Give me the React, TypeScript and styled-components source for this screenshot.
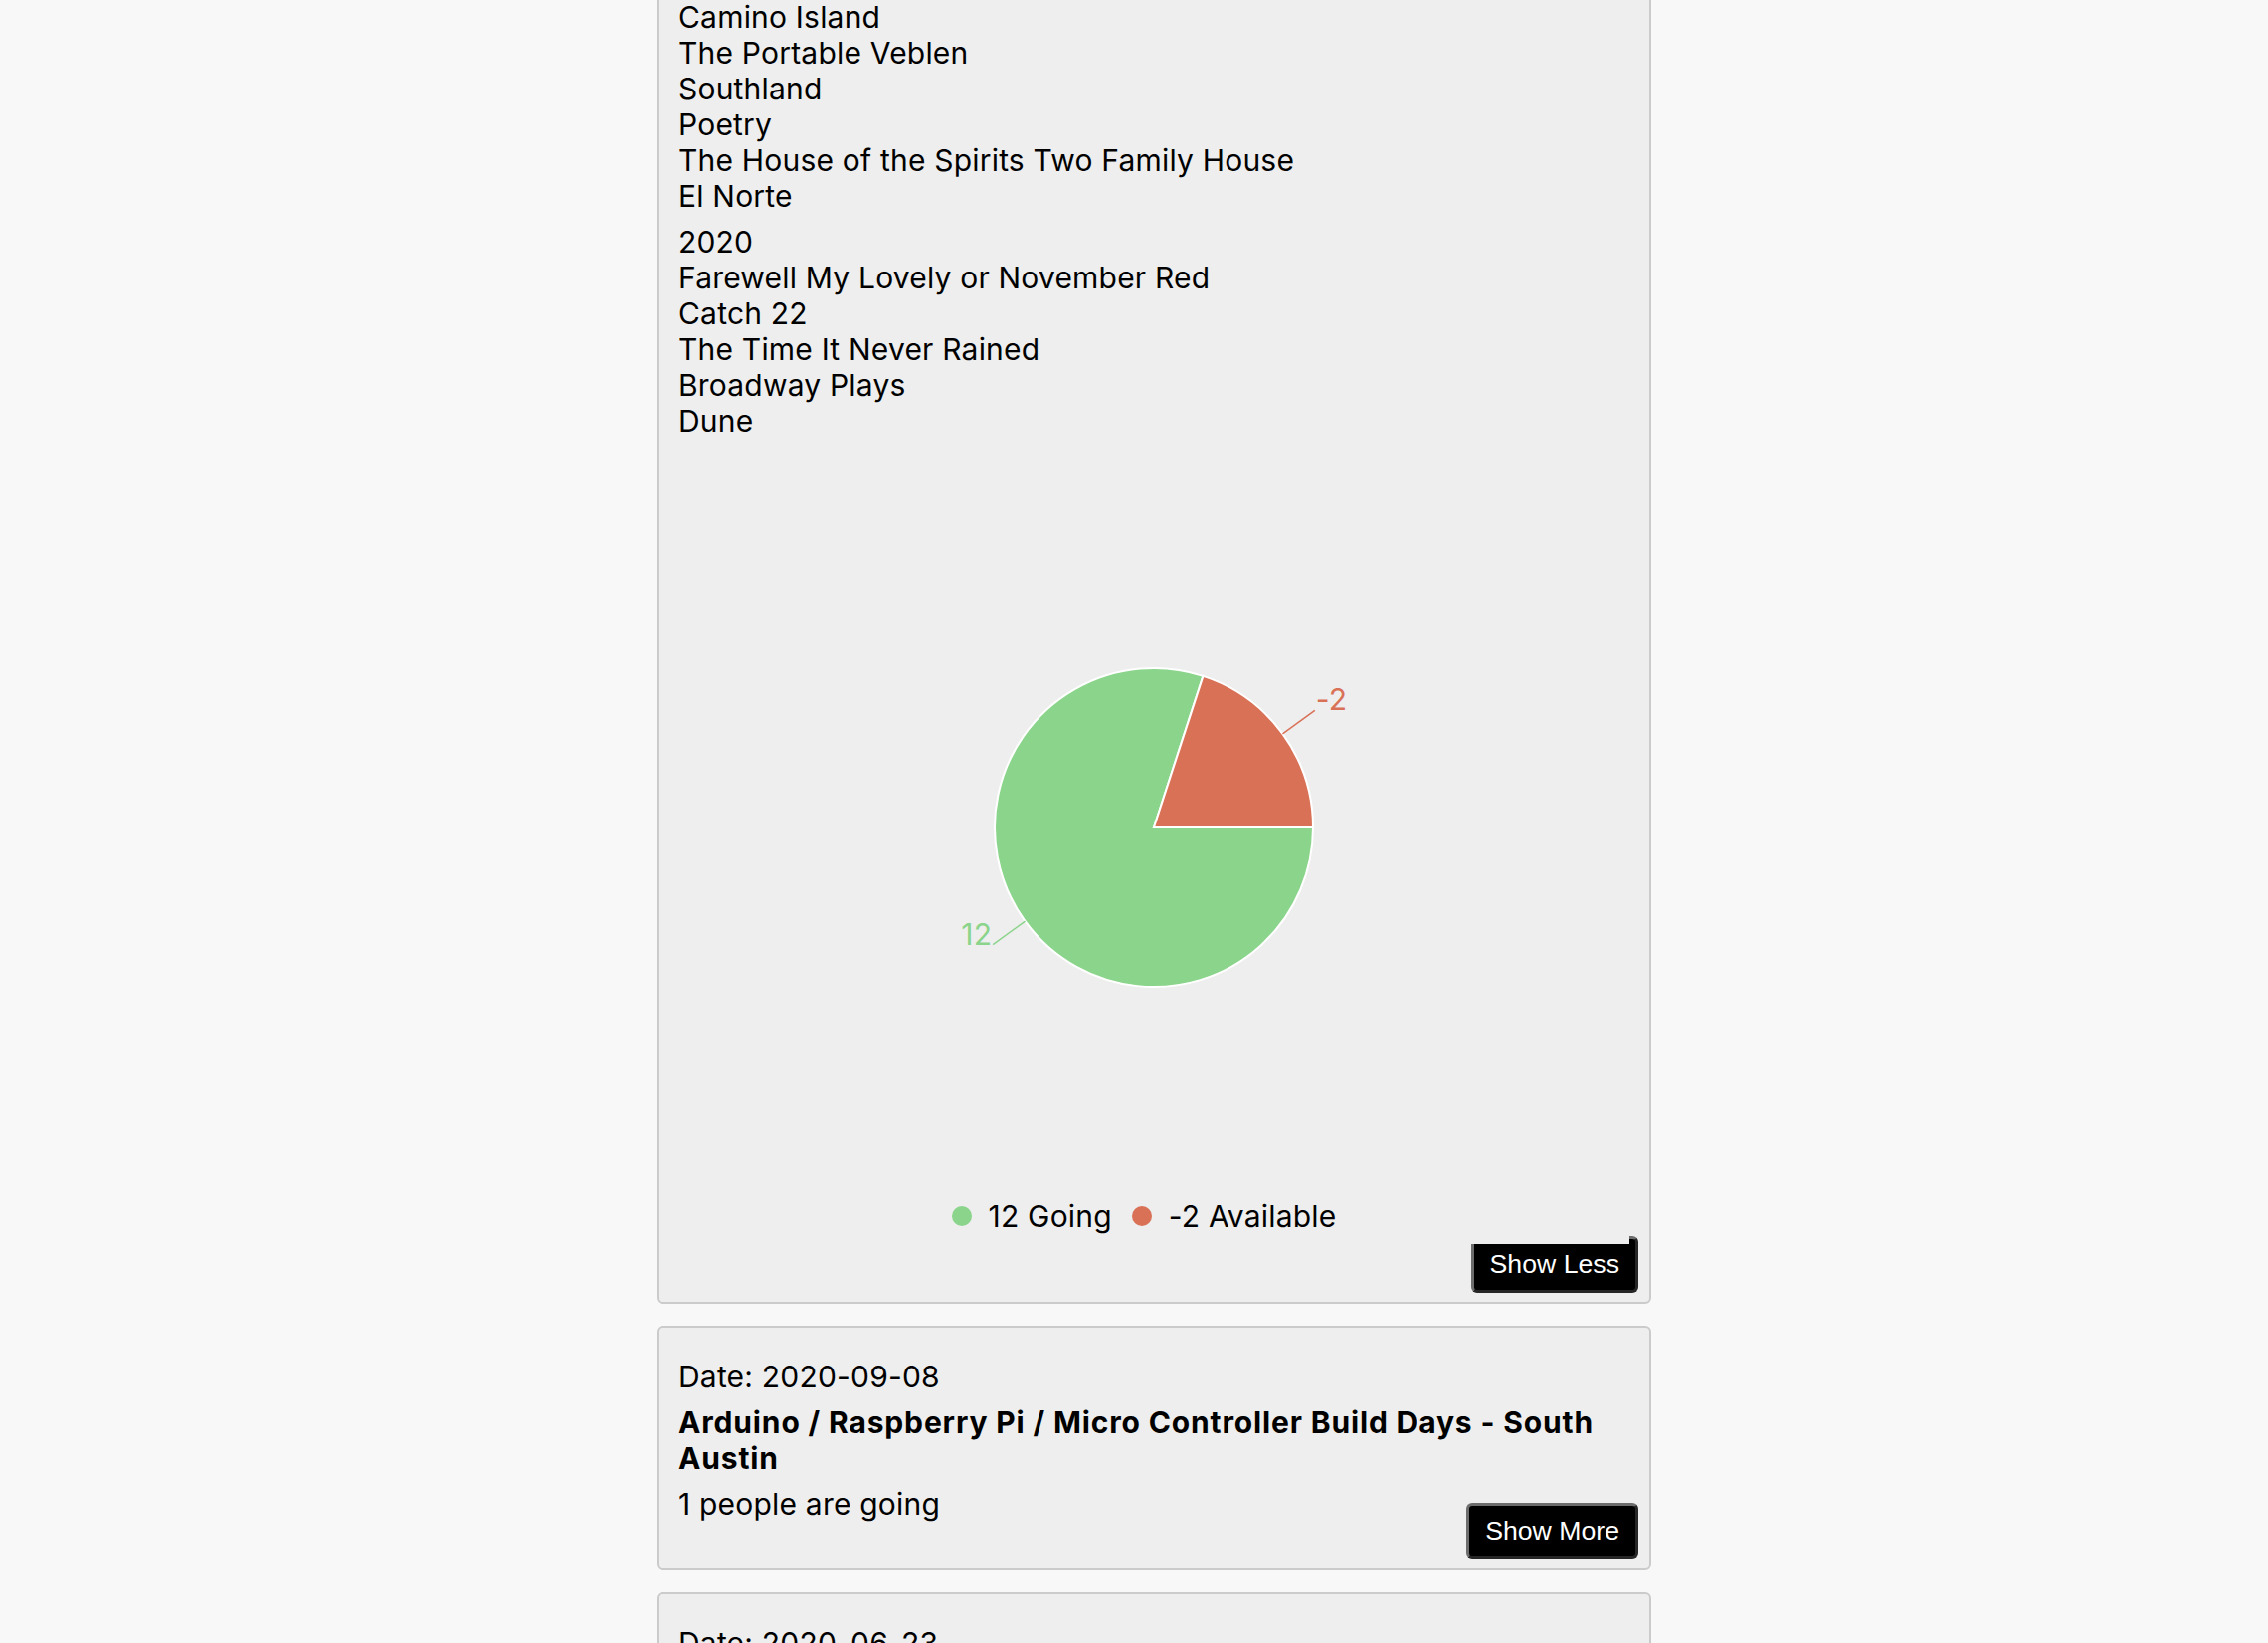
import React from "react";
import styled, { createGlobalStyle } from "styled-components";

const GlobalStyle = createGlobalStyle`
  html, body {
    margin: 0;
    padding: 0;
    background: #f8f8f8;
  }
  body {
    font-family: Inter, "Liberation Sans", Arial, sans-serif;
    font-size: 30px;
    line-height: 36px;
    letter-spacing: 0.2px;
    color: #000;
    overflow: hidden;
  }
`;

const Page = styled.div`
  display: flex;
  justify-content: center;
  padding-left: 40px;
`;

const Feed = styled.div`
  width: 1000px;
  display: flex;
  flex-direction: column;
  gap: 22px;
  margin-top: -34px;
`;

const Card = styled.section`
  box-sizing: border-box;
  width: 1000px;
  background: #eeeeee;
  border: 2px solid #cbcbcb;
  border-radius: 6px;
  padding: 31px 20px 9px 20px;
  display: flex;
  flex-direction: column;
`;

const Line = styled.div``;

const Title = styled.div`
  margin-top: 10px;
  font-weight: 700;
  letter-spacing: 0.85px;
`;

const YearGroup = styled.div`
  display: flex;
  flex-direction: column;
  & + & {
    margin-top: 10px;
  }
`;

const ChartBox = styled.div`
  position: relative;
  z-index: 1;
  margin-top: 10px;
  height: 800px;
  box-sizing: border-box;
  padding: 8px 0 10px;
  background: #eeeeee;
  display: grid;
  grid-template-rows: 1fr auto;
`;

const PieFrame = styled.div`
  display: flex;
  align-items: center;
  justify-content: center;
`;

const Legend = styled.ul`
  list-style: none;
  margin: 0;
  padding: 0;
  display: flex;
  justify-content: center;
`;

const LegendItem = styled.li`
  display: flex;
  align-items: center;
  gap: 17px;
  margin-right: 20px;
`;

const Dot = styled.span<{ $color: string }>`
  width: 20px;
  height: 20px;
  border-radius: 50%;
  background: ${(p) => p.$color};
`;

const Footer = styled.div<{ $lift?: number }>`
  display: flex;
  justify-content: space-between;
  align-items: flex-start;
  margin-top: ${(p) => p.$lift ?? 10}px;
`;

const Spacer = styled.span``;

const Button = styled.button<{ $drop?: number }>`
  font-family: "Liberation Sans", Arial, sans-serif;
  font-size: 26.67px;
  line-height: 31px;
  letter-spacing: 0;
  color: #fff;
  background: #000;
  border: 3px solid;
  border-color: #6c6c6c #262626 #262626 #6c6c6c;
  border-radius: 6px;
  padding: 10px 16px;
  margin-top: ${(p) => p.$drop ?? 0}px;
  margin-right: -9px;
  cursor: pointer;
`;

const GREEN = "#8bd48b";
const RED = "#d97157";

const groups: string[][] = [
  [
    "Camino Island",
    "The Portable Veblen",
    "Southland",
    "Poetry",
    "The House of the Spirits Two Family House",
    "El Norte",
  ],
  [
    "2020",
    "Farewell My Lovely or November Red",
    "Catch 22",
    "The Time It Never Rained",
    "Broadway Plays",
    "Dune",
  ],
];

function AttendancePie() {
  const cx = 220;
  const cy = 220;
  const r = 160;
  const a = (72 * Math.PI) / 180;
  const ex = cx + r * Math.cos(a);
  const ey = cy - r * Math.sin(a);
  const polar = (rad: number, deg: number) => {
    const t = (deg * Math.PI) / 180;
    return [cx + rad * Math.cos(t), cy - rad * Math.sin(t)];
  };
  const [r1x, r1y] = polar(r, 36);
  const [r2x, r2y] = polar(200, 36);
  const [g1x, g1y] = polar(r, 216);
  const [g2x, g2y] = polar(200, 216);
  return (
    <svg width="440" height="440" viewBox="0 0 440 440">
      <path
        d={`M${cx},${cy} L${ex},${ey} A${r},${r} 0 1 0 ${cx + r},${cy} Z`}
        fill={GREEN}
        stroke="#fff"
        strokeWidth="2"
      />
      <path
        d={`M${cx},${cy} L${cx + r},${cy} A${r},${r} 0 0 0 ${ex},${ey} Z`}
        fill={RED}
        stroke="#fff"
        strokeWidth="2"
      />
      <path d={`M${r1x},${r1y} L${r2x},${r2y}`} stroke={RED} strokeWidth="1.5" fill="none" />
      <path d={`M${g1x},${g1y} L${g2x},${g2y}`} stroke={GREEN} strokeWidth="1.5" fill="none" />
      <text x={r2x + 1} y={r2y} fill={RED} fontSize="30" fontFamily="Inter, sans-serif" textAnchor="start">
        -2
      </text>
      <text x={g2x - 1} y={g2y} fill={GREEN} fontSize="30" fontFamily="Inter, sans-serif" textAnchor="end">
        12
      </text>
    </svg>
  );
}

export default function App() {
  return (
    <>
      <GlobalStyle />
      <Page>
        <Feed>
          <Card>
            {groups.map((g, i) => (
              <YearGroup key={i}>
                {g.map((t) => (
                  <Line key={t}>{t}</Line>
                ))}
              </YearGroup>
            ))}
            <ChartBox>
              <PieFrame>
                <AttendancePie />
              </PieFrame>
              <Legend>
                <LegendItem>
                  <Dot $color={GREEN} />
                  <span>12 Going</span>
                </LegendItem>
                <LegendItem>
                  <Dot $color={RED} />
                  <span>-2 Available</span>
                </LegendItem>
              </Legend>
            </ChartBox>
            <Footer $lift={-8}>
              <Spacer />
              <Button>Show Less</Button>
            </Footer>
          </Card>
          <Card>
            <Line>Date: 2020-09-08</Line>
            <Title>Arduino / Raspberry Pi / Micro Controller Build Days - South Austin</Title>
            <Footer>
              <span>1 people are going</span>
              <Button $drop={17}>Show More</Button>
            </Footer>
          </Card>
          <Card>
            <Line>Date: 2020-06-23</Line>
            <Title>Arduino / Raspberry Pi / Micro Controller Build Days - North Austin</Title>
            <Footer>
              <span>3 people are going</span>
              <Button $drop={17}>Show More</Button>
            </Footer>
          </Card>
        </Feed>
      </Page>
    </>
  );
}
